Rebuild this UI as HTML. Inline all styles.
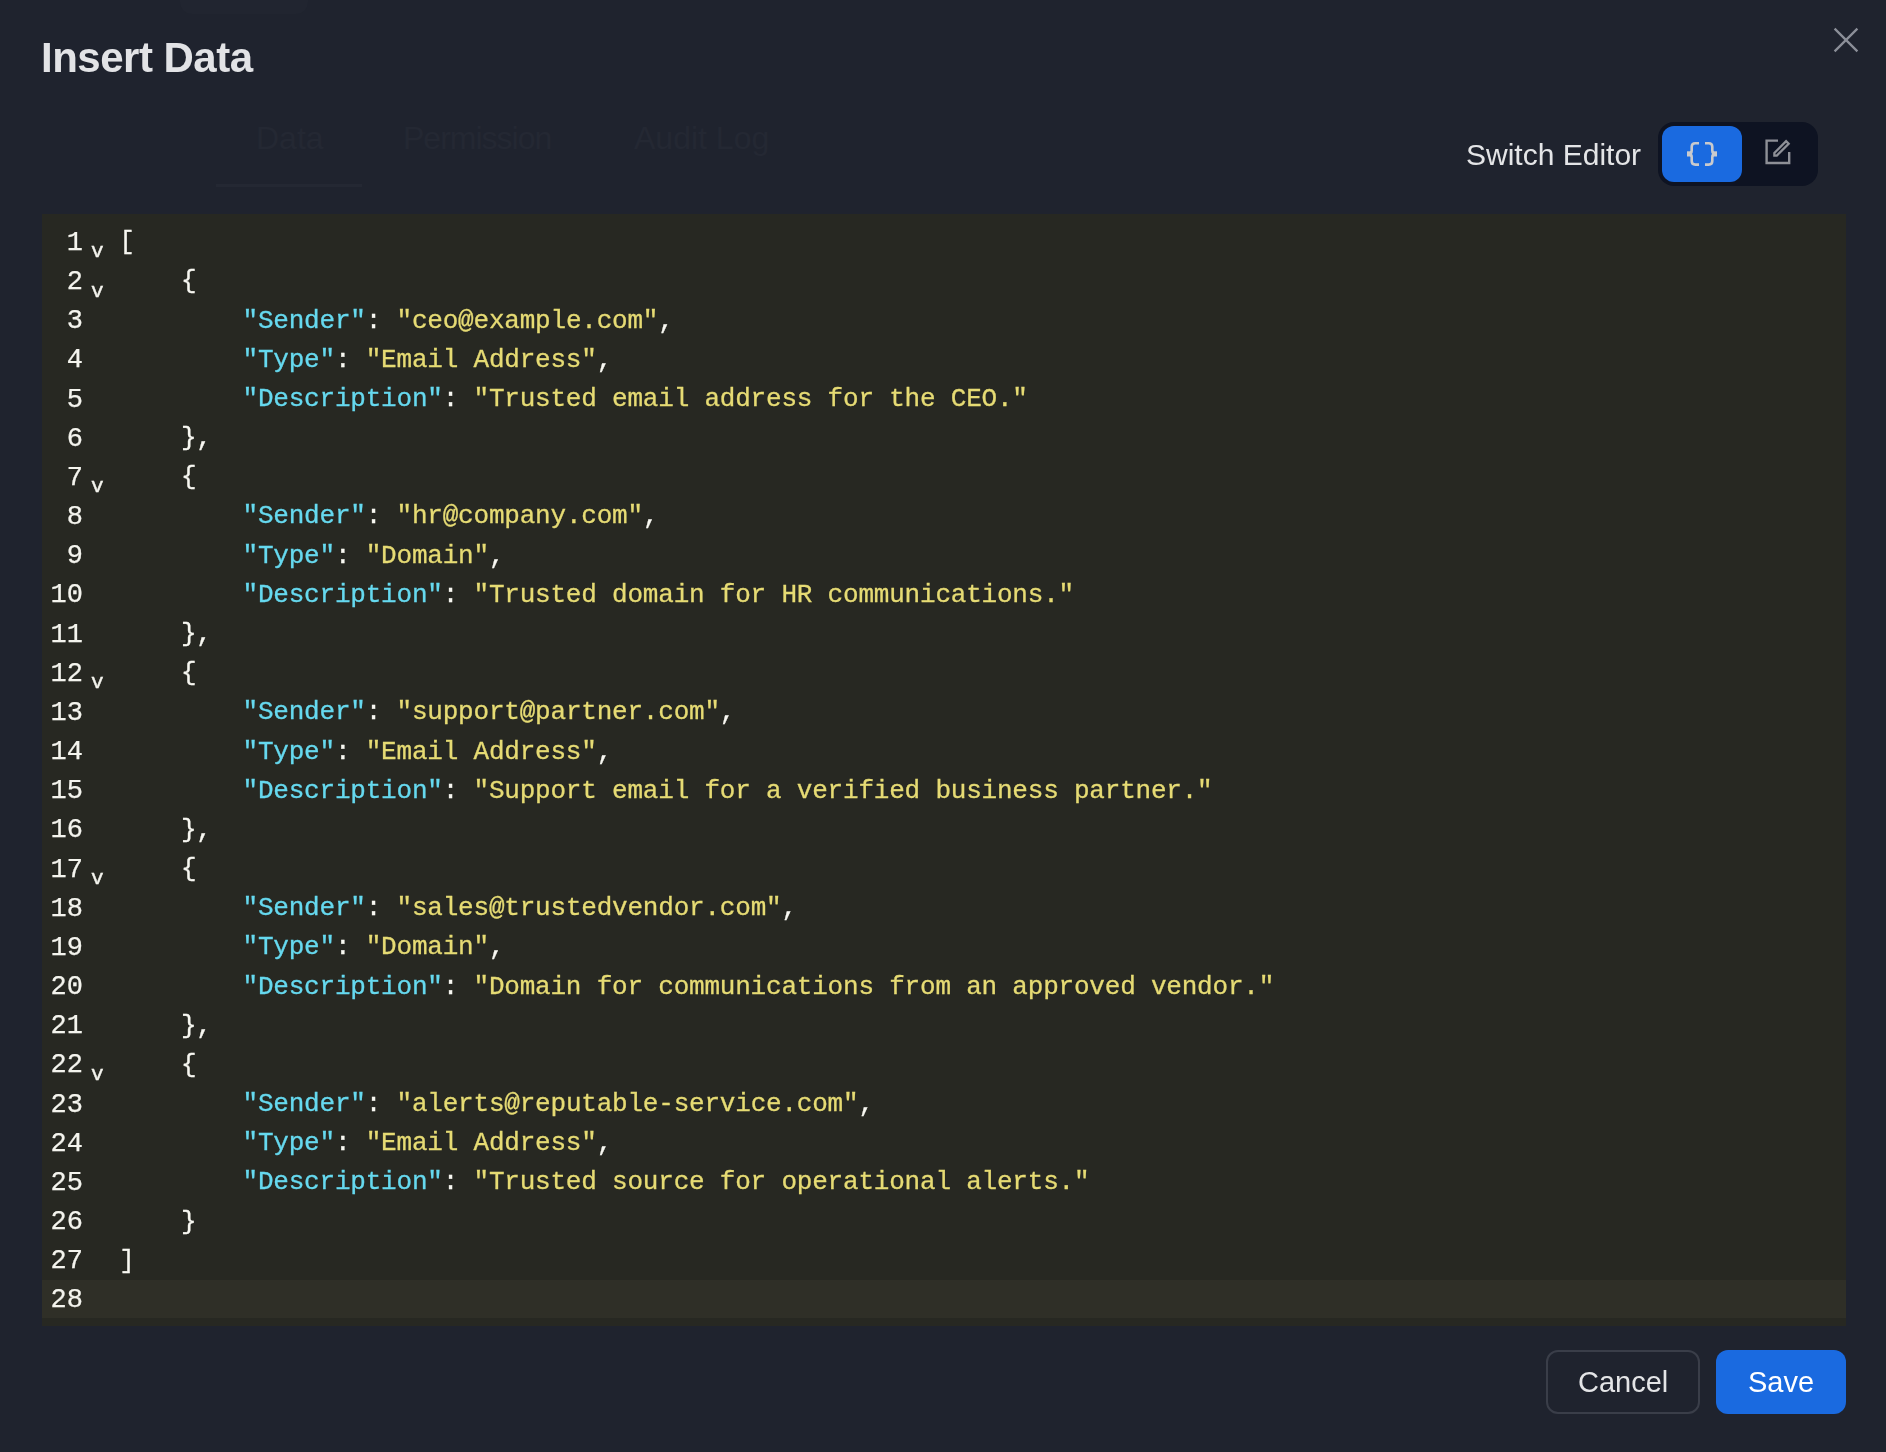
<!DOCTYPE html>
<html><head><meta charset="utf-8">
<style>
html,body{margin:0;padding:0;}
.gs{will-change:transform;}
body{width:1886px;height:1452px;background:#1f232e;position:relative;overflow:hidden;font-family:"Liberation Sans",sans-serif;}
.abs{position:absolute;}
#topghost{left:180px;top:-20px;width:128px;height:34px;border-radius:12px;background:#212530;}
#title{left:41px;top:30px;letter-spacing:-0.5px;font-size:42px;font-weight:bold;color:#e2e3e6;line-height:56px;white-space:nowrap;}
#close{left:1828px;top:22px;width:36px;height:36px;}
.tab{top:118px;font-size:32px;color:#242833;line-height:40px;white-space:nowrap;}
#tabline{left:216px;top:184px;width:146px;height:3px;background:#242833;}
#sw{left:1466px;top:135px;font-size:30px;color:#e4e5e7;line-height:40px;white-space:nowrap;}
#tog{left:1658px;top:122px;width:160px;height:64px;border-radius:16px;background:#0e1322;}
#togb{left:1662px;top:126px;width:80px;height:56px;border-radius:12px;background:#1a6ae0;}
#editor{left:42px;top:214px;width:1804px;height:1112px;background:#272822;overflow:hidden;}
.ln{position:absolute;left:0;width:1804px;height:39.2px;line-height:39.2px;}
.act{}
#actbg{position:absolute;left:0;top:1066px;width:1804px;height:38px;background:#2f2f27;}
.num{position:absolute;top:0;right:1763px;-webkit-text-stroke:0.25px;color:#f4f4ee;font-family:"Liberation Mono",monospace;font-size:27px;}
.fold{position:absolute;top:8.5px;left:49px;-webkit-text-stroke:0.4px;color:#f4f4ee;font-family:"Liberation Mono",monospace;font-size:21px;}
.code{position:absolute;top:-0.6px;left:77.35px;-webkit-text-stroke:0.3px;color:#f8f8f2;font-family:"Liberation Mono",monospace;font-size:26px;letter-spacing:-0.206px;white-space:pre;}
.k{color:#66d9ef;}
.s{color:#e6db74;}
.btn{top:1350px;height:64px;border-radius:12px;box-sizing:border-box;font-size:29px;text-align:center;line-height:64px;}
#cancel{left:1546px;width:154px;border:2px solid #3a3e49;color:#e4e5e7;line-height:60px;}
#save{left:1716px;width:130px;background:#1a6ae0;color:#ffffff;}
</style></head><body>
<div class="abs" id="topghost"></div>
<div class="abs gs" id="title">Insert Data</div>
<svg class="abs" id="close" viewBox="0 0 36 36"><path d="M6.6 6.6 L29.4 29.4 M29.4 6.6 L6.6 29.4" stroke="#8b8f98" stroke-width="2.3" fill="none"/></svg>
<div class="abs tab" style="left:256px">Data</div>
<div class="abs tab" style="left:403px;letter-spacing:-1px">Permission</div>
<div class="abs tab" style="left:634px">Audit Log</div>
<div class="abs" id="tabline"></div>
<div class="abs gs" id="sw">Switch Editor</div>
<div class="abs" id="tog"></div>
<div class="abs" id="togb"></div>
<svg class="abs" style="left:1680px;top:134px" width="44" height="40" viewBox="0 0 44 40"><g stroke="#c9cacd" stroke-width="2.6" fill="none"><path d="M19 9.2 H15.3 Q11.7 9.2 11.7 12.8 V16.6 Q11.7 19.9 8.4 19.9 Q11.7 19.9 11.7 23.2 V27 Q11.7 30.6 15.3 30.6 H19"/><path d="M25 9.2 H28.7 Q32.3 9.2 32.3 12.8 V16.6 Q32.3 19.9 35.6 19.9 Q32.3 19.9 32.3 23.2 V27 Q32.3 30.6 28.7 30.6 H25"/></g><rect x="7" y="17.3" width="4" height="5.2" fill="#c9cacd"/><rect x="33" y="17.3" width="4" height="5.2" fill="#c9cacd"/></svg>
<svg class="abs" style="left:1756px;top:130px" width="44" height="44" viewBox="0 0 44 44"><g stroke="#8e9097" stroke-width="2.4" fill="none"><path d="M22 10.6 H10.6 V33 H33.2 V22"/><path d="M18.35 22.95 L30.1 11.2 L32.65 13.75 L20.85 25.55 H18.35 Z" stroke-linejoin="miter" stroke-width="2.3"/></g></svg>
<div class="abs" id="editor"><div id="actbg"></div><div class="gs" style="position:absolute;left:0;top:0;width:1804px;height:1112px;">
<div style="top:9.90px" class="ln"><span class="num">1</span><span class="fold">v</span><span class="code">[</span></div>
<div style="top:49.07px" class="ln"><span class="num">2</span><span class="fold">v</span><span class="code">    {</span></div>
<div style="top:88.24px" class="ln"><span class="num">3</span><span class="code">        <span class="k">&quot;Sender&quot;</span>: <span class="s">&quot;ceo@example.com&quot;</span>,</span></div>
<div style="top:127.41px" class="ln"><span class="num">4</span><span class="code">        <span class="k">&quot;Type&quot;</span>: <span class="s">&quot;Email Address&quot;</span>,</span></div>
<div style="top:166.58px" class="ln"><span class="num">5</span><span class="code">        <span class="k">&quot;Description&quot;</span>: <span class="s">&quot;Trusted email address for the CEO.&quot;</span></span></div>
<div style="top:205.75px" class="ln"><span class="num">6</span><span class="code">    },</span></div>
<div style="top:244.92px" class="ln"><span class="num">7</span><span class="fold">v</span><span class="code">    {</span></div>
<div style="top:284.09px" class="ln"><span class="num">8</span><span class="code">        <span class="k">&quot;Sender&quot;</span>: <span class="s">&quot;hr@company.com&quot;</span>,</span></div>
<div style="top:323.26px" class="ln"><span class="num">9</span><span class="code">        <span class="k">&quot;Type&quot;</span>: <span class="s">&quot;Domain&quot;</span>,</span></div>
<div style="top:362.43px" class="ln"><span class="num">10</span><span class="code">        <span class="k">&quot;Description&quot;</span>: <span class="s">&quot;Trusted domain for HR communications.&quot;</span></span></div>
<div style="top:401.60px" class="ln"><span class="num">11</span><span class="code">    },</span></div>
<div style="top:440.77px" class="ln"><span class="num">12</span><span class="fold">v</span><span class="code">    {</span></div>
<div style="top:479.94px" class="ln"><span class="num">13</span><span class="code">        <span class="k">&quot;Sender&quot;</span>: <span class="s">&quot;support@partner.com&quot;</span>,</span></div>
<div style="top:519.11px" class="ln"><span class="num">14</span><span class="code">        <span class="k">&quot;Type&quot;</span>: <span class="s">&quot;Email Address&quot;</span>,</span></div>
<div style="top:558.28px" class="ln"><span class="num">15</span><span class="code">        <span class="k">&quot;Description&quot;</span>: <span class="s">&quot;Support email for a verified business partner.&quot;</span></span></div>
<div style="top:597.45px" class="ln"><span class="num">16</span><span class="code">    },</span></div>
<div style="top:636.62px" class="ln"><span class="num">17</span><span class="fold">v</span><span class="code">    {</span></div>
<div style="top:675.79px" class="ln"><span class="num">18</span><span class="code">        <span class="k">&quot;Sender&quot;</span>: <span class="s">&quot;sales@trustedvendor.com&quot;</span>,</span></div>
<div style="top:714.96px" class="ln"><span class="num">19</span><span class="code">        <span class="k">&quot;Type&quot;</span>: <span class="s">&quot;Domain&quot;</span>,</span></div>
<div style="top:754.13px" class="ln"><span class="num">20</span><span class="code">        <span class="k">&quot;Description&quot;</span>: <span class="s">&quot;Domain for communications from an approved vendor.&quot;</span></span></div>
<div style="top:793.30px" class="ln"><span class="num">21</span><span class="code">    },</span></div>
<div style="top:832.47px" class="ln"><span class="num">22</span><span class="fold">v</span><span class="code">    {</span></div>
<div style="top:871.64px" class="ln"><span class="num">23</span><span class="code">        <span class="k">&quot;Sender&quot;</span>: <span class="s">&quot;alerts@reputable-service.com&quot;</span>,</span></div>
<div style="top:910.81px" class="ln"><span class="num">24</span><span class="code">        <span class="k">&quot;Type&quot;</span>: <span class="s">&quot;Email Address&quot;</span>,</span></div>
<div style="top:949.98px" class="ln"><span class="num">25</span><span class="code">        <span class="k">&quot;Description&quot;</span>: <span class="s">&quot;Trusted source for operational alerts.&quot;</span></span></div>
<div style="top:989.15px" class="ln"><span class="num">26</span><span class="code">    }</span></div>
<div style="top:1028.32px" class="ln"><span class="num">27</span><span class="code">]</span></div>
<div style="top:1067.49px" class="ln act"><span class="num">28</span><span class="code"></span></div></div>
</div>
<div class="abs btn" id="cancel"><span class="gs" style="display:inline-block">Cancel</span></div>
<div class="abs btn" id="save"><span class="gs" style="display:inline-block">Save</span></div>
</body></html>
